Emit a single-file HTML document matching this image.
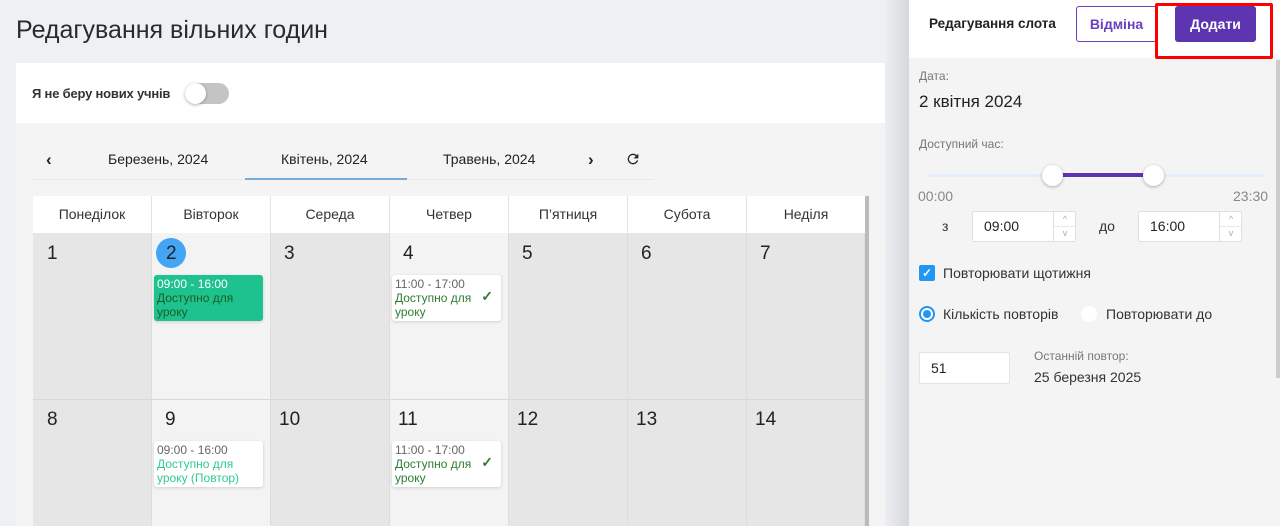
<!DOCTYPE html>
<html><head><meta charset="utf-8"><style>
*{box-sizing:border-box;margin:0;padding:0}
html,body{width:1280px;height:526px;overflow:hidden}
body{background:#eef0f4;font-family:"Liberation Sans",sans-serif;color:#222;position:relative}
.a{position:absolute}
.day{position:absolute;top:196px;height:37px;background:#fff;text-align:center;line-height:37px;font-size:14px;color:#333;border-right:1px solid #e4e4e4}
.cell{position:absolute;border-right:1px solid #ddd;border-bottom:1px solid #d8d8d8}
.num{position:absolute;font-size:19px;color:#222}
.ev{position:absolute;background:#fff;border-radius:3px;box-shadow:0 1px 3px rgba(0,0,0,.15);font-size:12px;line-height:14px;padding:2px 3px}
.g{color:#2e7d32}
.sp{position:absolute;font-size:9px;color:#aaa;line-height:13px;text-align:center;width:22px}
</style></head><body>
<div class="a" style="left:16px;top:16px;font-size:25px;color:#2a2a2a">Редагування вільних годин</div>
<div class="a" style="left:16px;top:63px;width:869px;height:463px;background:#f4f4f4"></div>
<div class="a" style="left:16px;top:63px;width:869px;height:60px;background:#fff"></div>
<div class="a" style="left:32px;top:86px;font-size:13px;font-weight:bold;color:#333;letter-spacing:-0.2px">Я не беру нових учнів</div>
<div class="a" style="left:185px;top:83px;width:44px;height:21px;border-radius:11px;background:#c4c4c4"></div>
<div class="a" style="left:185px;top:83px;width:21px;height:21px;border-radius:50%;background:#fff;box-shadow:0 1px 3px rgba(0,0,0,.3)"></div>
<div class="a" style="left:32px;top:179px;width:622px;height:1px;background:#e6eaf0"></div>
<div class="a" style="left:245px;top:178px;width:162px;height:2px;background:#7aa9e0"></div>
<div class="a" style="left:46px;top:150px;font-size:17px;font-weight:bold">‹</div>
<div class="a" style="left:108px;top:151px;font-size:14px;color:#222">Березень, 2024</div>
<div class="a" style="left:281px;top:151px;font-size:14px;color:#222">Квітень, 2024</div>
<div class="a" style="left:443px;top:151px;font-size:14px;color:#222">Травень, 2024</div>
<div class="a" style="left:588px;top:150px;font-size:17px;font-weight:bold">›</div>
<svg class="a" style="left:625px;top:151px" width="16" height="16" viewBox="0 0 24 24"><path d="M17.65 6.35A7.95 7.95 0 0 0 12 4a8 8 0 1 0 7.73 10h-2.08A6 6 0 1 1 12 6c1.66 0 3.14.69 4.22 1.78L13 11h7V4z" fill="#222"/></svg>
<div class="day" style="left:33px;width:119px">Понеділок</div>
<div class="day" style="left:152px;width:119px">Вівторок</div>
<div class="day" style="left:271px;width:119px">Середа</div>
<div class="day" style="left:390px;width:119px">Четвер</div>
<div class="day" style="left:509px;width:119px">П’ятниця</div>
<div class="day" style="left:628px;width:119px">Субота</div>
<div class="day" style="left:747px;width:118px;border:0">Неділя</div>
<div class="a" style="left:865px;top:196px;width:4px;height:330px;background:#bbb"></div>
<div class="cell" style="left:33px;top:233px;width:119px;height:167px;background:#e6e6e6"></div>
<div class="cell" style="left:152px;top:233px;width:119px;height:167px;background:#f3f3f3"></div>
<div class="cell" style="left:271px;top:233px;width:119px;height:167px;background:#e6e6e6"></div>
<div class="cell" style="left:390px;top:233px;width:119px;height:167px;background:#f3f3f3"></div>
<div class="cell" style="left:509px;top:233px;width:119px;height:167px;background:#e6e6e6"></div>
<div class="cell" style="left:628px;top:233px;width:119px;height:167px;background:#e6e6e6"></div>
<div class="cell" style="left:747px;top:233px;width:118px;height:167px;background:#e6e6e6"></div>
<div class="cell" style="left:33px;top:400px;width:119px;height:130px;background:#e6e6e6"></div>
<div class="cell" style="left:152px;top:400px;width:119px;height:130px;background:#f3f3f3"></div>
<div class="cell" style="left:271px;top:400px;width:119px;height:130px;background:#e6e6e6"></div>
<div class="cell" style="left:390px;top:400px;width:119px;height:130px;background:#f3f3f3"></div>
<div class="cell" style="left:509px;top:400px;width:119px;height:130px;background:#e6e6e6"></div>
<div class="cell" style="left:628px;top:400px;width:119px;height:130px;background:#e6e6e6"></div>
<div class="cell" style="left:747px;top:400px;width:118px;height:130px;background:#e6e6e6"></div>
<div class="a" style="left:156px;top:238px;width:30px;height:30px;border-radius:50%;background:#42a5f5"></div>
<div class="num" style="left:47px;top:243px">1</div>
<div class="num" style="left:166px;top:243px">2</div>
<div class="num" style="left:284px;top:243px">3</div>
<div class="num" style="left:403px;top:243px">4</div>
<div class="num" style="left:522px;top:243px">5</div>
<div class="num" style="left:641px;top:243px">6</div>
<div class="num" style="left:760px;top:243px">7</div>
<div class="num" style="left:47px;top:409px">8</div>
<div class="num" style="left:165px;top:409px">9</div>
<div class="num" style="left:279px;top:409px">10</div>
<div class="num" style="left:398px;top:409px">11</div>
<div class="num" style="left:517px;top:409px">12</div>
<div class="num" style="left:636px;top:409px">13</div>
<div class="num" style="left:755px;top:409px">14</div>
<div class="ev" style="left:154px;top:275px;width:109px;height:46px;background:#1dc28f;color:#fff"><div>09:00 - 16:00</div><div style="color:#1b5e20">Доступно для<br>уроку</div></div>
<div class="ev" style="left:392px;top:275px;width:109px;height:46px"><div style="color:#666">11:00 - 17:00</div><div class="g">Доступно для<br>уроку</div><span class="a g" style="right:8px;top:14px;font-size:14px;font-weight:bold">✓</span></div>
<div class="ev" style="left:154px;top:441px;width:109px;height:46px"><div style="color:#666">09:00 - 16:00</div><div style="color:#2ecc8f">Доступно для<br>уроку (Повтор)</div></div>
<div class="ev" style="left:392px;top:441px;width:109px;height:46px"><div style="color:#666">11:00 - 17:00</div><div class="g">Доступно для<br>уроку</div><span class="a g" style="right:8px;top:14px;font-size:14px;font-weight:bold">✓</span></div>
<div class="a" style="left:885px;top:0;width:24px;height:526px;background:linear-gradient(90deg,#eceef1,#d6d8dc)"></div>
<div class="a" style="left:909px;top:0;width:371px;height:526px;background:#f4f4f4"></div>
<div class="a" style="left:909px;top:0;width:371px;height:58px;background:#fff"></div>
<div class="a" style="left:929px;top:16px;font-size:13.5px;font-weight:bold;color:#222">Редагування слота</div>
<div class="a" style="left:1076px;top:6px;width:81px;height:36px;border:1px solid #6a3fc0;border-radius:3px;color:#6a3fc0;font-size:14px;font-weight:bold;text-align:center;line-height:34px">Відміна</div>
<div class="a" style="left:1175px;top:6px;width:81px;height:36px;background:#5e35b1;border-radius:3px;color:#fff;font-size:14px;font-weight:bold;text-align:center;line-height:36px">Додати</div>
<div class="a" style="left:1155px;top:3px;width:118px;height:56px;border:3px solid #f00;border-radius:2px"></div>
<div class="a" style="left:919px;top:69px;font-size:12px;color:#777">Дата:</div>
<div class="a" style="left:919px;top:92px;font-size:17px;color:#222">2 квітня 2024</div>
<div class="a" style="left:919px;top:137px;font-size:12px;color:#777">Доступний час:</div>
<div class="a" style="left:929px;top:174px;width:336px;height:3px;background:#e3eef8"></div>
<div class="a" style="left:1052px;top:173px;width:101px;height:4px;background:#5e35b1"></div>
<div class="a" style="left:1042px;top:165px;width:21px;height:21px;border-radius:50%;background:#fff;box-shadow:0 1px 3px rgba(0,0,0,.3)"></div>
<div class="a" style="left:1143px;top:165px;width:21px;height:21px;border-radius:50%;background:#fff;box-shadow:0 1px 3px rgba(0,0,0,.3)"></div>
<div class="a" style="left:918px;top:188px;font-size:14px;color:#888">00:00</div>
<div class="a" style="left:1233px;top:188px;font-size:14px;color:#888">23:30</div>
<div class="a" style="left:942px;top:218px;font-size:14px;color:#333">з</div>
<div class="a" style="left:972px;top:211px;width:104px;height:31px;background:#fff;border:1px solid #e0e0e0;border-radius:2px;font-size:14px;line-height:29px;padding-left:11px">09:00</div>
<div class="a" style="left:1053px;top:212px;width:1px;height:29px;background:#e0e0e0"></div>
<div class="a" style="left:1054px;top:226px;width:21px;height:1px;background:#e8e8e8"></div>
<div class="sp" style="left:1054px;top:213px">^</div><div class="sp" style="left:1054px;top:227px">v</div>
<div class="a" style="left:1099px;top:218px;font-size:14px;color:#333">до</div>
<div class="a" style="left:1138px;top:211px;width:104px;height:31px;background:#fff;border:1px solid #e0e0e0;border-radius:2px;font-size:14px;line-height:29px;padding-left:11px">16:00</div>
<div class="a" style="left:1219px;top:212px;width:1px;height:29px;background:#e0e0e0"></div>
<div class="a" style="left:1220px;top:226px;width:21px;height:1px;background:#e8e8e8"></div>
<div class="sp" style="left:1220px;top:213px">^</div><div class="sp" style="left:1220px;top:227px">v</div>
<div class="a" style="left:919px;top:265px;width:16px;height:16px;background:#2196f3;border-radius:2px;color:#fff;font-size:12px;text-align:center;line-height:16px;font-weight:bold">✓</div>
<div class="a" style="left:943px;top:265px;font-size:14px;color:#333">Повторювати щотижня</div>
<div class="a" style="left:919px;top:306px;width:16px;height:16px;border:2px solid #2196f3;border-radius:50%;background:#fff"></div>
<div class="a" style="left:923px;top:310px;width:8px;height:8px;border-radius:50%;background:#2196f3"></div>
<div class="a" style="left:943px;top:306px;font-size:14px;color:#333">Кількість повторів</div>
<div class="a" style="left:1081px;top:306px;width:16px;height:16px;border-radius:50%;background:#fff"></div>
<div class="a" style="left:1106px;top:306px;font-size:14px;color:#333">Повторювати до</div>
<div class="a" style="left:919px;top:352px;width:91px;height:32px;background:#fff;border:1px solid #e4e4e4;border-radius:2px;font-size:14px;line-height:30px;padding-left:11px">51</div>
<div class="a" style="left:1034px;top:349px;font-size:12px;color:#777">Останній повтор:</div>
<div class="a" style="left:1034px;top:369px;font-size:14px;color:#333">25 березня 2025</div>
<div class="a" style="left:1276px;top:60px;width:4px;height:318px;background:#ccc"></div>
</body></html>
